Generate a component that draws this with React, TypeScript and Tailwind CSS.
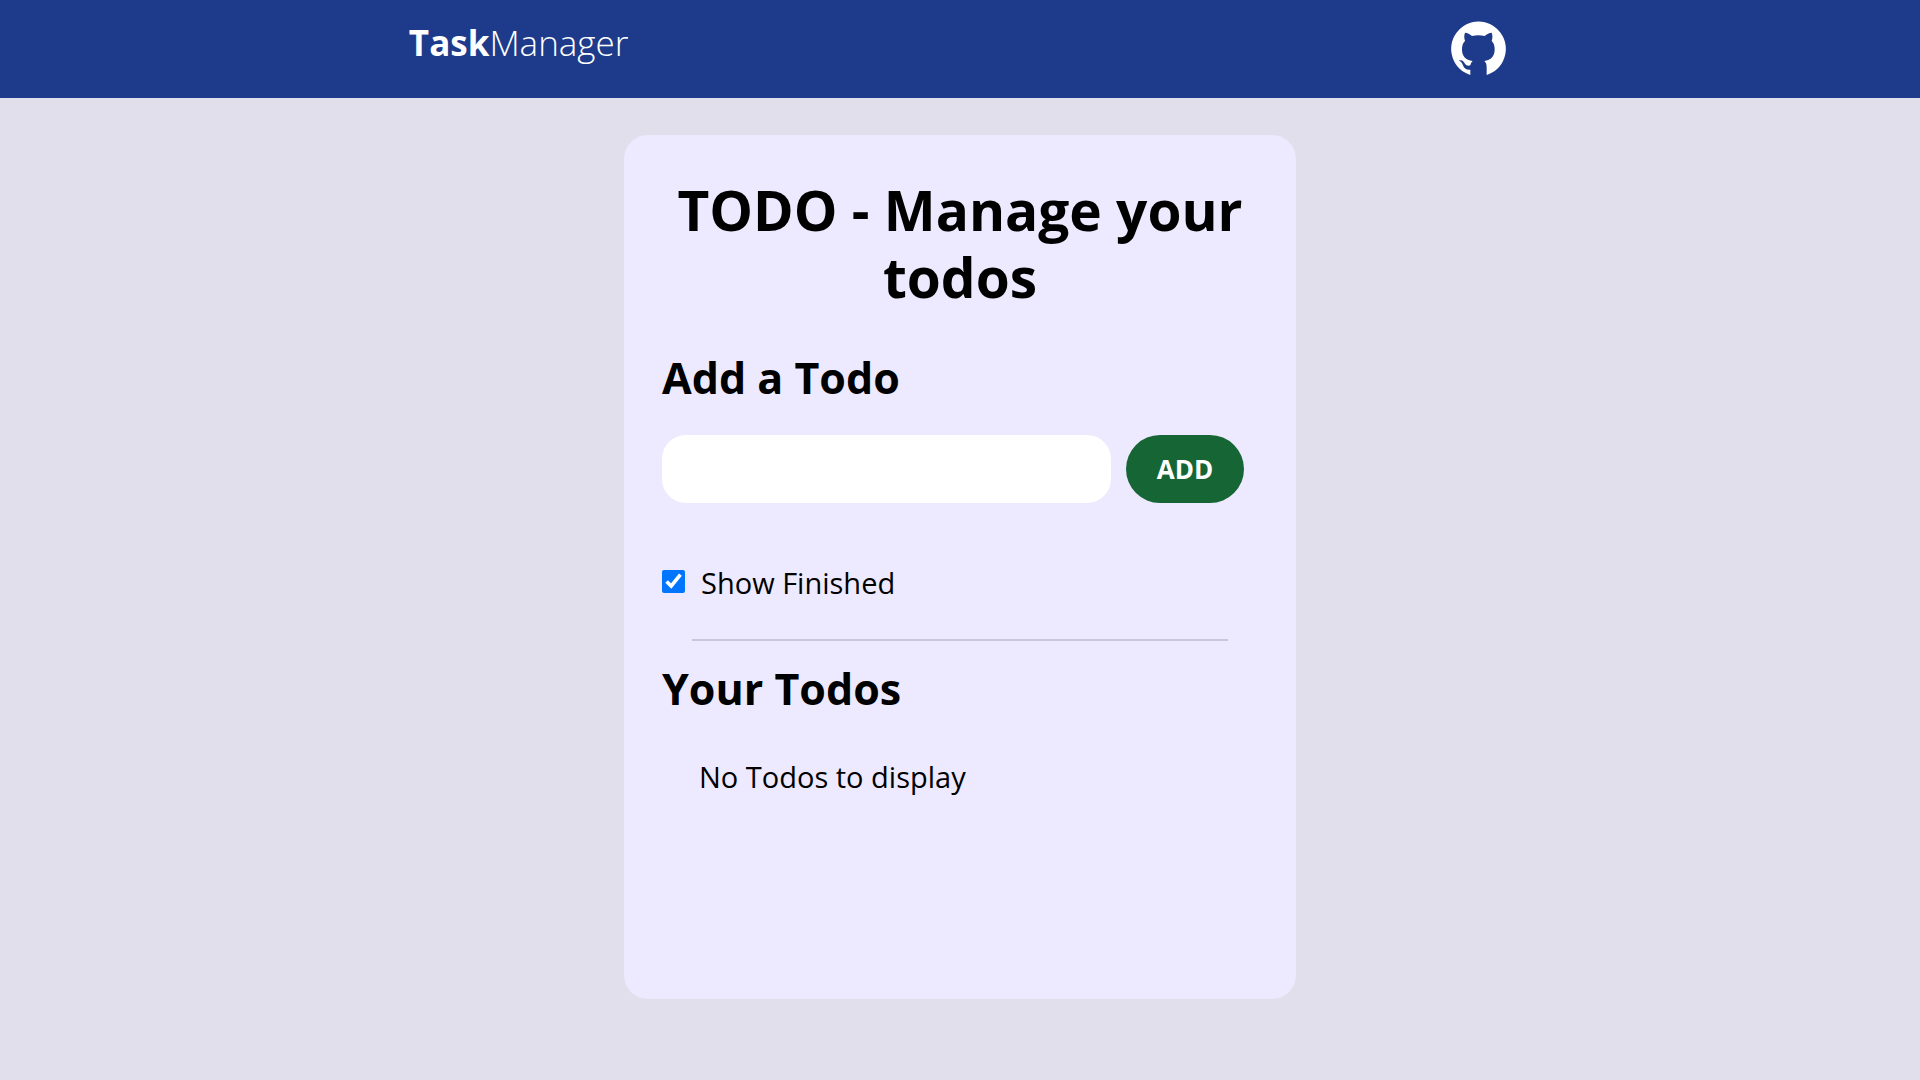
import { useState } from "react";

function GithubMark() {
  return (
    <svg viewBox="60 62 165 165" className="size-[55px]" fill="currentColor" aria-hidden="true">
      <path d="M118 208V224A82 82 0 1 1 167 224V201C167 192 165 186 160 182C180 180 191 168 191 147C191 137 189 129 182 122C185 114 185 105 182 97C174 97 168 101 161 107C149 104 135 104 123 107C116 101 110 97 102 97C99 105 99 114 102 122C95 129 93 137 93 147C93 168 104 180 125 182C121 186 119 190 118 195C110 198 104 194 100 187C96 180 89 178 84 181C91 184 93 188 96 195C99 205 108 210 118 208Z" />
    </svg>
  );
}

function Navbar() {
  return (
    <nav className="flex h-[98px] items-start justify-around bg-[#1e3a8a] text-white">
      <a href="#" className="pt-[17px] text-[35px] leading-[52px] font-bold">
        Task<span className="font-light">Manager</span>
      </a>
      <a href="https://github.com" aria-label="GitHub" className="px-[5px] pt-[21px]">
        <GithubMark />
      </a>
    </nav>
  );
}

export default function App() {
  const [todo, setTodo] = useState("");
  const [showFinished, setShowFinished] = useState(true);

  return (
    <div className="min-h-screen bg-[#e2dfed] font-['Open_Sans','Noto_Sans',sans-serif] text-black">
      <Navbar />
      <main className="mx-auto mt-[37px] min-h-[80vh] w-[35%] rounded-3xl bg-[#ede9fe] px-[38px] py-[41px]">
        <h1 className="text-center text-[55px] leading-[67px] font-bold">TODO - Manage your todos</h1>
        <h2 className="mt-[38px] text-[43px] leading-[60px] font-bold">
          <label htmlFor="todo">Add a Todo</label>
        </h2>
        <form className="mt-[27px] flex gap-[15px] pr-[14px]" onSubmit={(e) => e.preventDefault()}>
          <input
            id="todo"
            type="text"
            value={todo}
            onChange={(e) => setTodo(e.target.value)}
            className="h-[68px] min-w-0 flex-1 rounded-3xl bg-white px-7 text-[29px] outline-none"
          />
          <button type="submit" className="h-[68px] w-[118px] rounded-full bg-[#166534] text-[26px] font-bold text-white">
            ADD
          </button>
        </form>
        <div className="mt-[57px] flex items-start gap-[16px]">
          <input
            id="finished"
            type="checkbox"
            checked={showFinished}
            onChange={(e) => setShowFinished(e.target.checked)}
            className="mt-[10px] size-[23px] accent-[#0075ff]"
          />
          <label htmlFor="finished" className="text-[29px] leading-[45px]">Show Finished</label>
        </div>
        <hr className="mx-auto mt-[34px] w-[90%] border-t-2 border-[#cac5d8]" />
        <h2 className="mt-[18px] text-[43px] leading-[60px] font-bold">Your Todos</h2>
        <p className="mt-[35px] ml-[37px] text-[29px] leading-[45px]">No Todos to display</p>
      </main>
    </div>
  );
}
